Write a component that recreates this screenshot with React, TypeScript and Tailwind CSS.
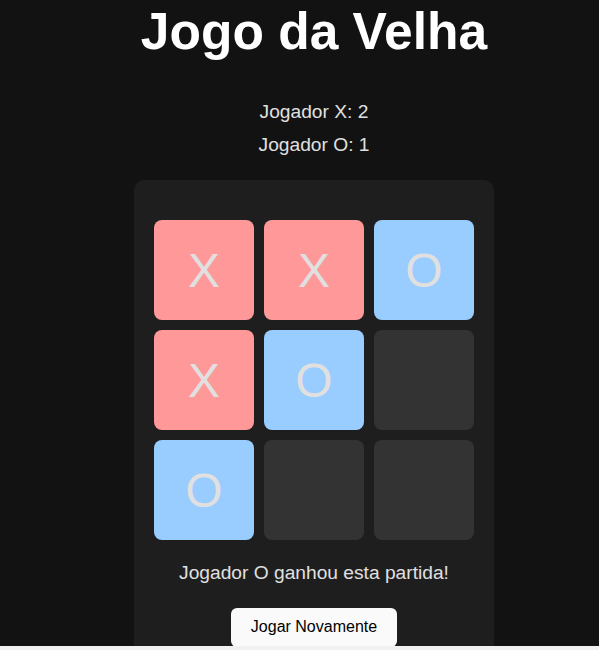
import { useState } from "react";

type Cell = "X" | "O" | null;

const initialBoard: Cell[] = ["X", "X", "O", "X", "O", null, "O", null, null];

export default function App() {
  const [board] = useState<Cell[]>(initialBoard);

  const cellClass = (v: Cell) => {
    if (v === "X") return "bg-[#ff9999]";
    if (v === "O") return "bg-[#99ccff]";
    return "bg-[#333333]";
  };

  return (
    <div className="h-[650px] w-full overflow-hidden flex flex-col font-['Liberation_Sans',Arial,sans-serif]">
      <main className="h-[646px] shrink-0 overflow-hidden bg-[#121212] pl-[29px] flex flex-col items-center">
        <h1 className="h-[61px] pt-[2px] text-[51.5px] leading-[1.15] font-bold text-white">Jogo da Velha</h1>

        <div className="mt-[40px] flex flex-col items-center gap-[11px] text-[19.2px] leading-[1.15] text-[#e0e0e0]">
          <p>Jogador X: 2</p>
          <p>Jogador O: 1</p>
        </div>

        <div className="mt-[24px] w-[360px] shrink-0 rounded-[10px] bg-[#1e1e1e] px-5 pt-[40px] pb-5 flex flex-col items-center">
          <div className="grid grid-cols-[repeat(3,100px)] gap-[10px]">
            {board.map((v, i) => (
              <div
                key={i}
                className={`h-[100px] w-[100px] rounded-[8px] flex items-center justify-center text-[48px] leading-[1.15] text-[#e0e0e0] ${cellClass(v)}`}
              >
                {v}
              </div>
            ))}
          </div>

          <p className="mt-[22px] text-[19.2px] leading-[1.15] text-[#e0e0e0]">
            Jogador O ganhou esta partida!
          </p>

          <button className="mt-[24px] rounded-[6px] bg-[#fafafa] px-5 py-[10px] text-[16px] leading-[1.15] text-black">
            Jogar Novamente
          </button>
        </div>
      </main>
      <div className="h-[4px] shrink-0 bg-[#f1f1f1]" />
    </div>
  );
}
